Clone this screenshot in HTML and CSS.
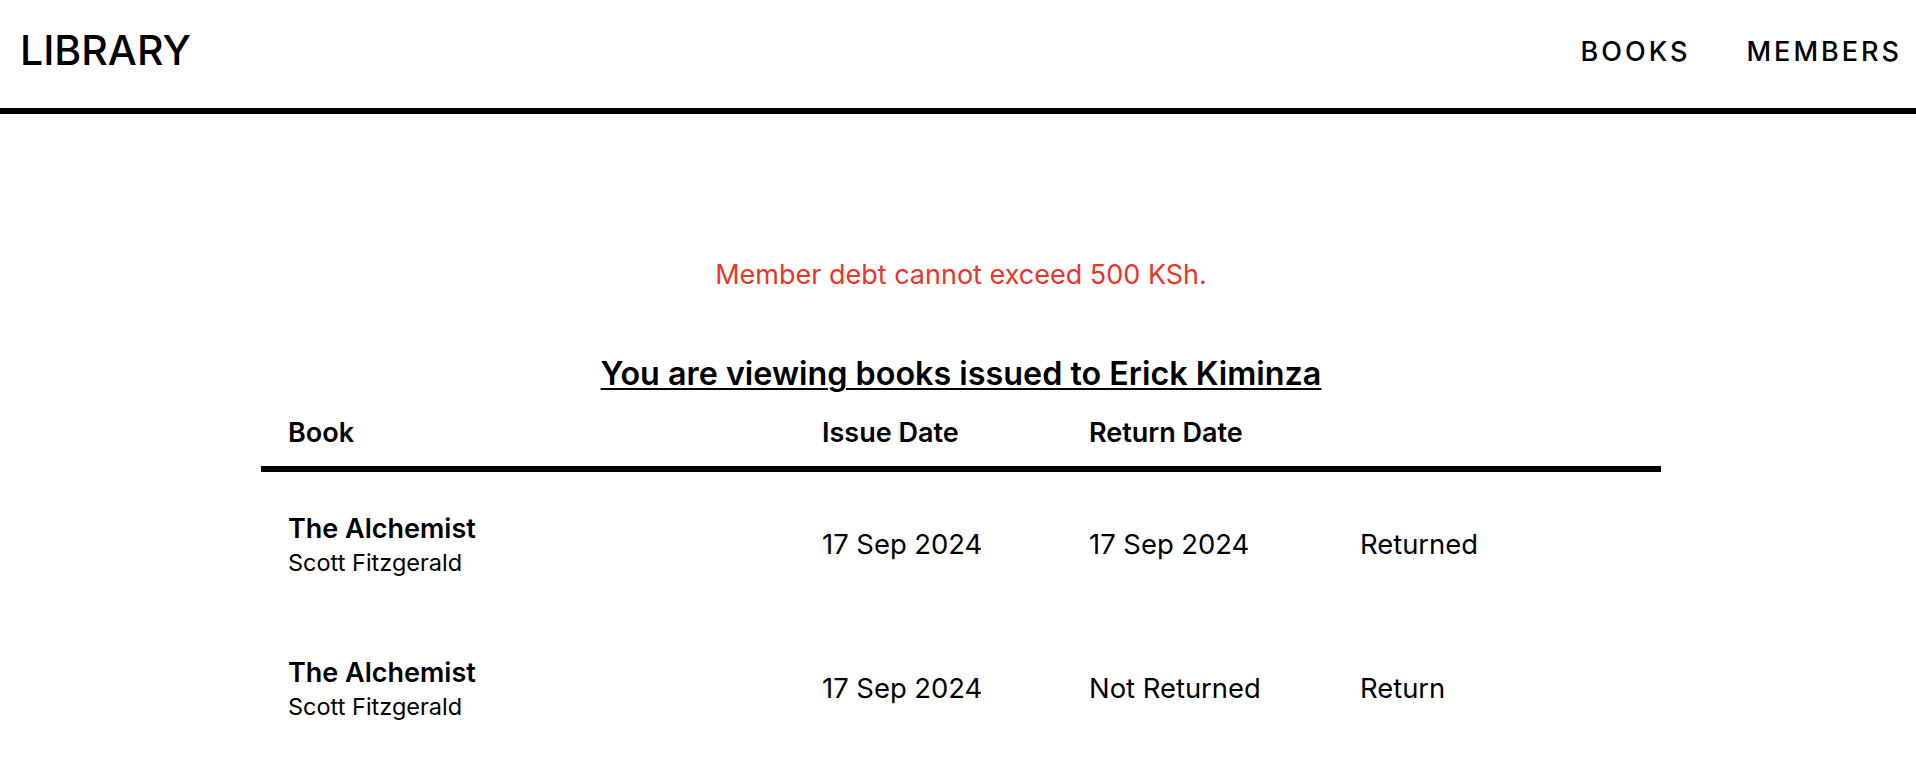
FILE: index.html
```html
<!DOCTYPE html>
<html lang="en">
<head>
<meta charset="utf-8">
<title>Library</title>
<link rel="stylesheet" href="styles.css">
</head>
<body>
<header class="topbar">
  <div class="brand">LIBRARY</div>
  <nav class="nav">
    <a class="nav-link" href="#">BOOKS</a>
    <a class="nav-link" href="#">MEMBERS</a>
  </nav>
</header>
<main class="content">
  <p class="error">Member debt cannot exceed 500 KSh.</p>
  <h1 class="title">You are viewing books issued to Erick Kiminza</h1>
  <div class="issues">
    <div class="row head">
      <div class="cell">Book</div>
      <div class="cell">Issue Date</div>
      <div class="cell">Return Date</div>
      <div class="cell"></div>
    </div>
    <div class="row item">
      <div class="cell book">
        <div class="book-title">The Alchemist</div>
        <div class="book-author">Scott Fitzgerald</div>
      </div>
      <div class="cell">17 Sep 2024</div>
      <div class="cell">17 Sep 2024</div>
      <div class="cell">Returned</div>
    </div>
    <div class="row item">
      <div class="cell book">
        <div class="book-title">The Alchemist</div>
        <div class="book-author">Scott Fitzgerald</div>
      </div>
      <div class="cell">17 Sep 2024</div>
      <div class="cell">Not Returned</div>
      <div class="cell">Return</div>
    </div>
  </div>
</main>
</body>
</html>
```
FILE: styles.css
```css
* { box-sizing: border-box; }

body {
  margin: 0;
  font-family: Inter, "Liberation Sans", sans-serif;
  color: #000;
  background: #fff;
}

.topbar {
  display: flex;
  justify-content: space-between;
  align-items: flex-start;
  height: 114px;
  padding: 25px 14px 0 20px;
  border-bottom: 6px solid #000;
}

.brand {
  font-size: 41px;
  font-weight: 500;
  line-height: 50px;
}

.nav {
  display: flex;
  gap: 56px;
  padding-top: 2px;
}

.nav-link {
  font-size: 27px;
  font-weight: 500;
  line-height: 50px;
  letter-spacing: 3px;
  color: #000;
  text-decoration: none;
}

.content {
  padding-left: 6px;
}

.error {
  margin: 144px 0 0;
  text-align: center;
  color: #e8362a;
  font-size: 27px;
  line-height: 33px;
}

.title {
  margin: 63px 0 0;
  text-align: center;
  font-size: 32.3px;
  font-weight: 600;
  line-height: 40px;
  text-decoration: underline;
  text-decoration-thickness: 2px;
  text-underline-offset: 3px;
}

.issues {
  width: 1400px;
  margin: 22px auto 0;
}

.row {
  display: grid;
  grid-template-columns: 534px 267px 271px 328px;
  align-items: center;
}

.cell {
  padding-left: 27px;
  font-size: 27.4px;
  line-height: 33px;
}

.head {
  padding-bottom: 17px;
  border-bottom: 6px solid #000;
}

.head .cell {
  font-size: 27px;
  font-weight: 600;
}

.item {
  height: 144px;
}

.book-title {
  font-weight: 600;
  font-size: 27px;
  line-height: 33px;
}

.book-author {
  margin-top: 4px;
  font-size: 23.5px;
  line-height: 27px;
}
```
